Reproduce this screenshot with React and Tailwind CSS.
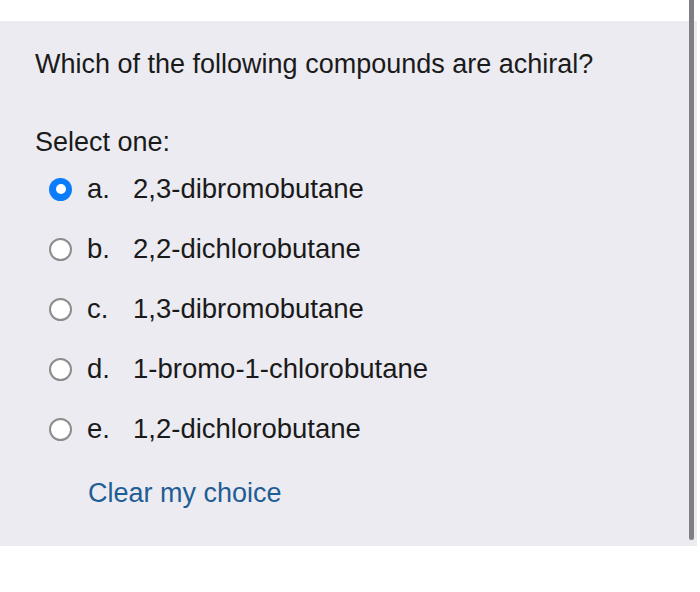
import React, { useState } from "react";

const options = [
  { key: "a", label: "2,3-dibromobutane" },
  { key: "b", label: "2,2-dichlorobutane" },
  { key: "c", label: "1,3-dibromobutane" },
  { key: "d", label: "1-bromo-1-chlorobutane" },
  { key: "e", label: "1,2-dichlorobutane" },
];

const Radio = ({ checked }) =>
  checked ? (
    <span className="w-[23px] h-[23px] rounded-full bg-[#0b7dfa] flex items-center justify-center">
      <span className="w-[10px] h-[10px] rounded-full bg-white" />
    </span>
  ) : (
    <span className="w-[23px] h-[23px] rounded-full bg-white border-2 border-[#8c8c8c]" />
  );

const App = () => {
  const [selected, setSelected] = useState("a");

  return (
    <div className="w-[700px] h-[592px] bg-white relative font-['Liberation_Sans',Arial,sans-serif] text-[#1a1a1a]">
      <div className="h-[21px]" />
      <div className="bg-[#ebebf1] h-[525px] w-[697px] pl-[35px] pt-[27px]">
        <p className="text-[27px] leading-[32px]">
          Which of the following compounds are achiral?
        </p>
        <p className="text-[27px] leading-[32px] mt-[46px]">Select one:</p>
        <div className="flex flex-col mt-[1px]">
          {options.map((o) => (
            <label
              key={o.key}
              onClick={() => setSelected(o.key)}
              className="h-[60px] flex items-center cursor-pointer"
            >
              <span className="ml-[14px] w-[23px] flex">
                <Radio checked={selected === o.key} />
              </span>
              <span className="ml-[15px] w-[46px] text-[27.5px]">{o.key}.</span>
              <span className="text-[27.5px]">{o.label}</span>
            </label>
          ))}
        </div>
        <button
          onClick={() => setSelected(null)}
          className="block mt-[18px] ml-[53px] text-[27px] leading-[32px] text-[#1f5d94]"
        >
          Clear my choice
        </button>
      </div>
      <div className="absolute right-[6px] top-0 w-[5px] h-[540px] bg-[#7e7e84] rounded-b-full" />
    </div>
  );
};

export default App;
